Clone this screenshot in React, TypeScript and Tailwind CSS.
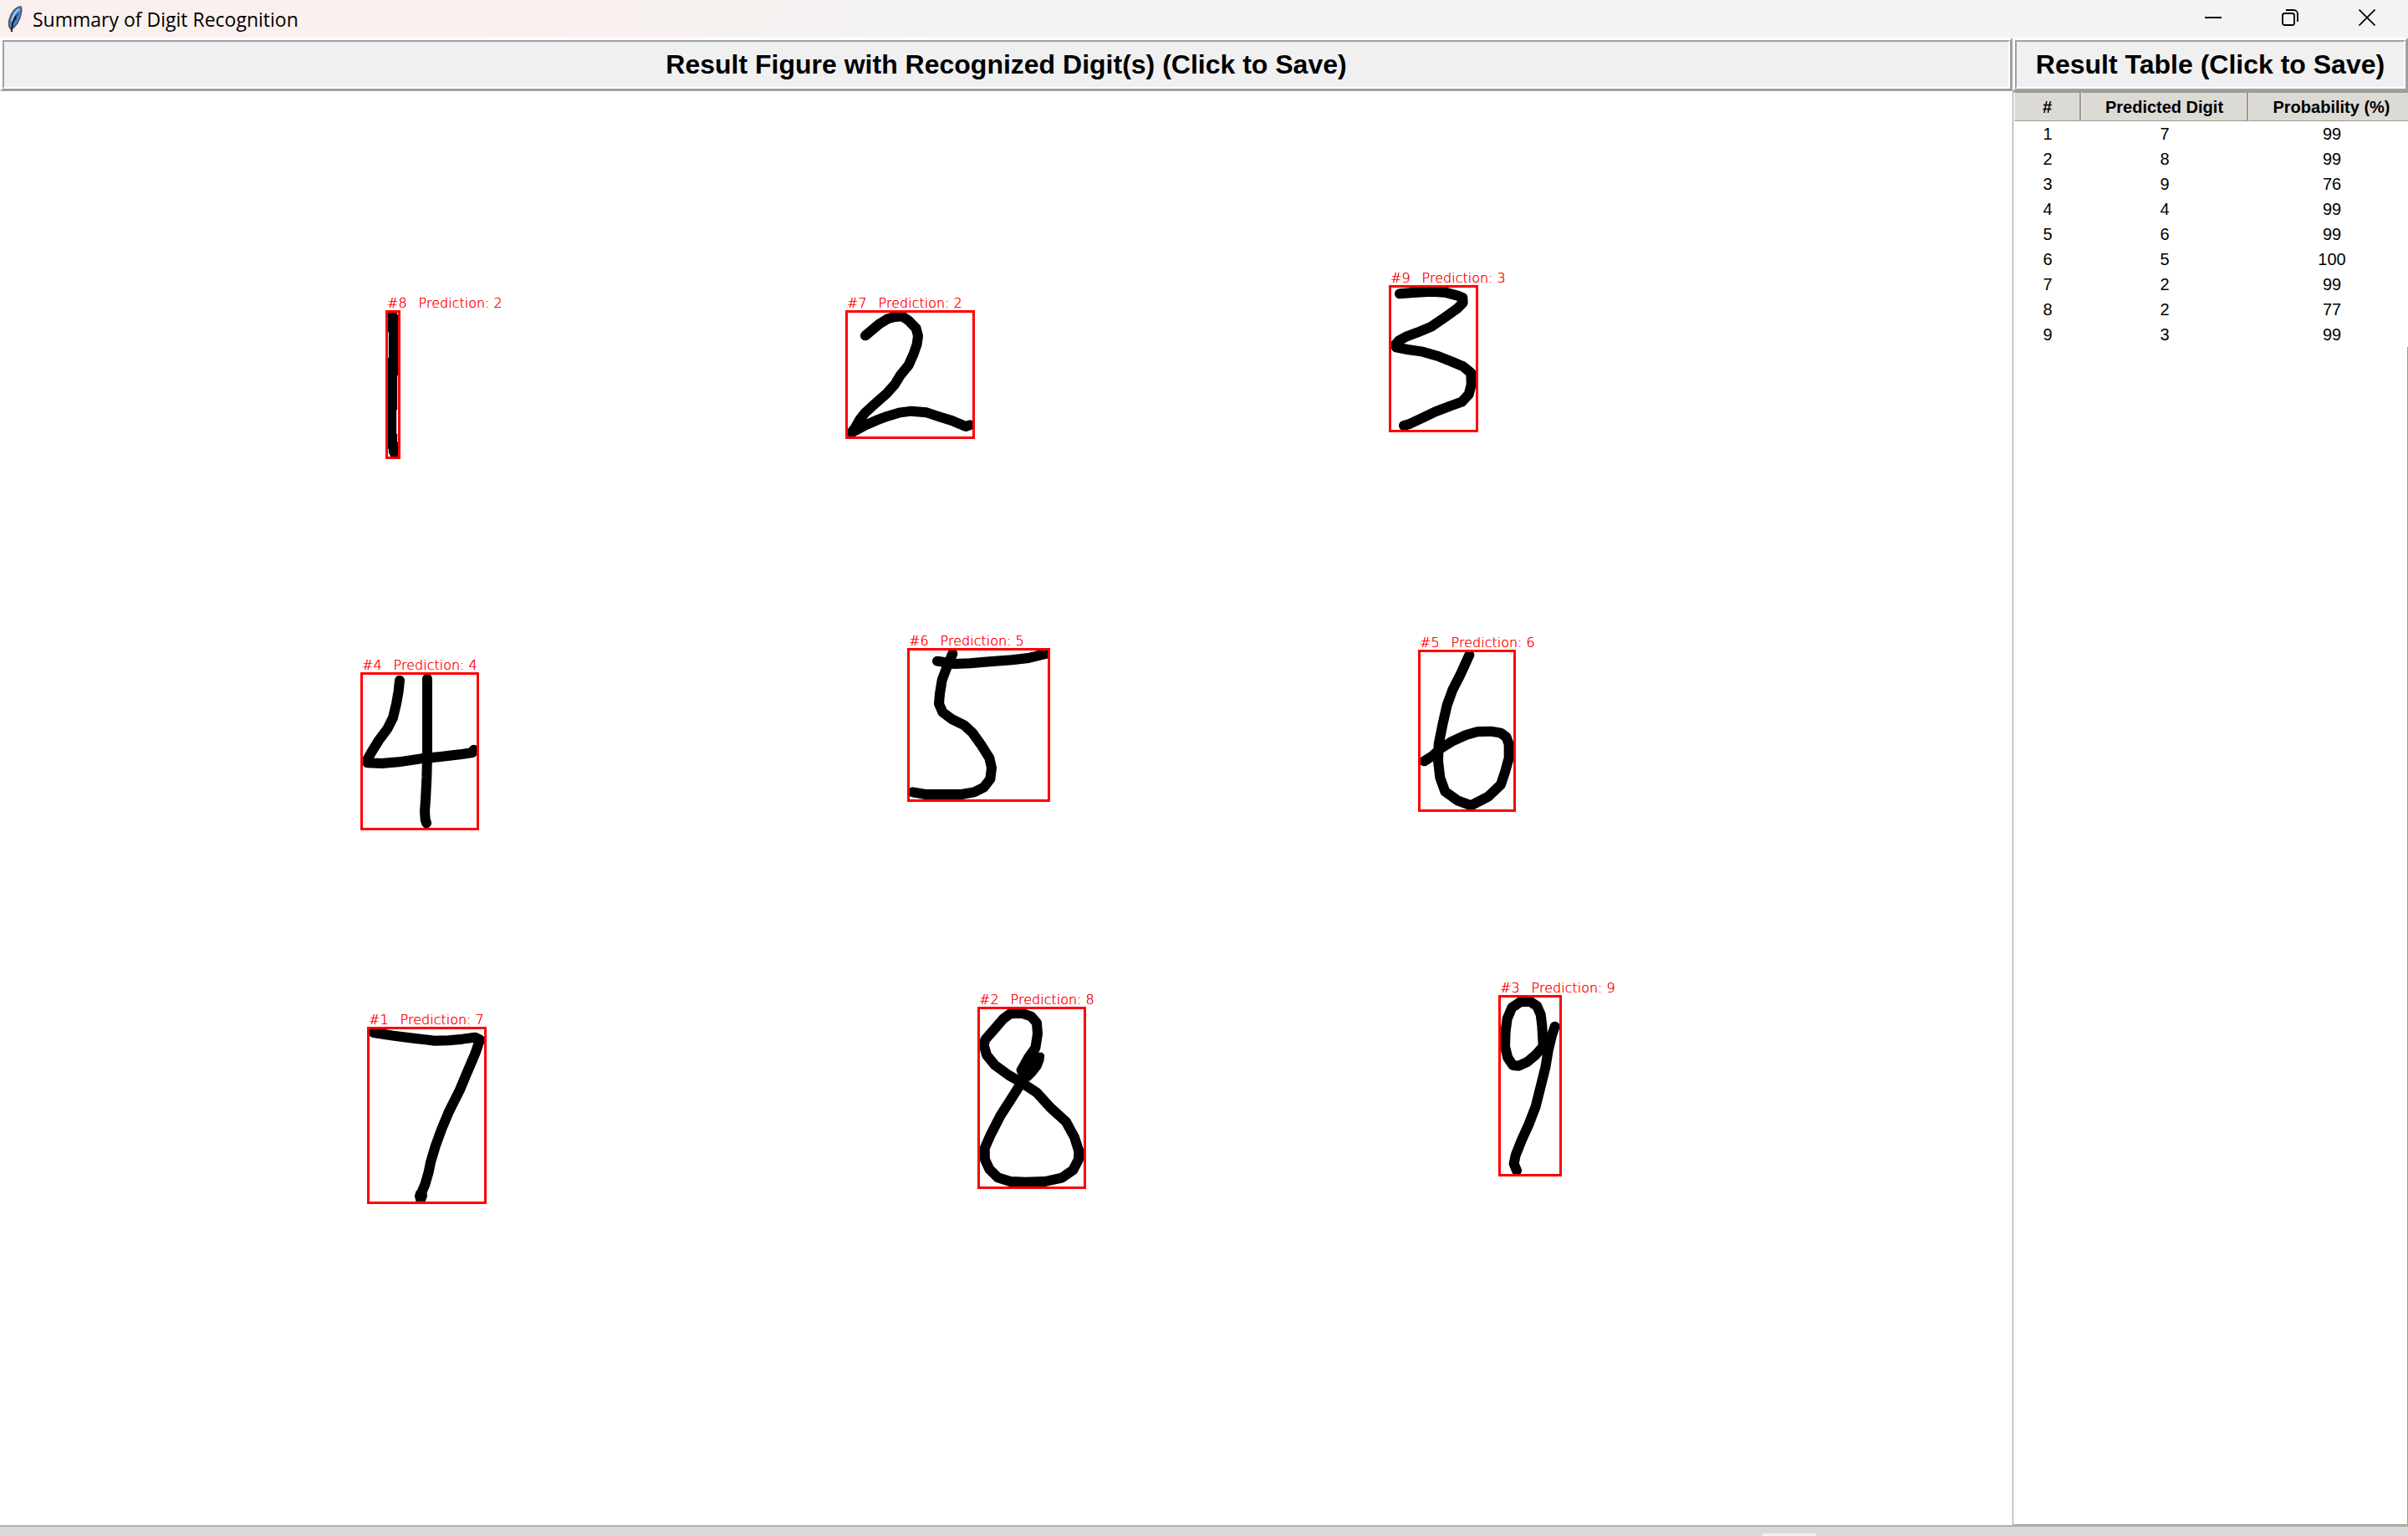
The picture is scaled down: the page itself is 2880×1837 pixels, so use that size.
import React from 'react';

type Detection = {
  id: number;
  digit: number;
  probability: number;
  place: string;
  viewBox: string;
  strokes: string[];
  shapes?: string[];
};

/* Every viewBox uses three drawing units per screen pixel. */
const detections: Detection[] = [
  {
    id: 1,
    digit: 7,
    probability: 99,
    place: 'left-[439px] top-[1119px] w-[143px] h-[212px]',
    viewBox: '57 84 429 636',
    strokes: [
      'M80 105 L150 116 L230 126 L300 134 L350 133 L400 128 L445 122 L462 130 L445 180 L415 250 L390 310 L350 390 L325 450 L303 510 L285 570 L278 605 L265 650 L250 685',
    ],
    shapes: ['M228 691 L234 672 L266 666 L273 690 L266 710 L233 710 Z'],
  },
  {
    id: 2,
    digit: 8,
    probability: 99,
    place: 'left-[1169px] top-[1095px] w-[130px] h-[218px]',
    viewBox: '57 72 390 654',
    strokes: [
      'M275 255 L250 290 L218 340 L180 400 L140 462 L105 530 L83 580 L84 620 L100 655 L130 685 L175 699 L230 701 L300 699 L360 686 L400 658 L420 620 L421 590 L405 540 L375 485 L320 435 L270 380 L220 347 L170 318 L120 282 L90 245 L80 210 L85 190 L120 150 L150 115 L175 97 L215 95 L250 107 L270 130 L273 170 L265 220 L240 255 L215 300',
    ],
    shapes: ['M250 235 L290 237 L297 245 L295 266 L285 292 L265 318 L245 338 L205 320 L198 295 Z'],
  },
  {
    id: 3,
    digit: 9,
    probability: 76,
    place: 'left-[1792px] top-[1081px] w-[76px] h-[217px]',
    viewBox: '36 90 228 651',
    strokes: [
      'M205 265 L170 305 L140 330 L110 344 L88 342 L70 315 L60 275 L62 220 L68 175 L85 135 L115 115 L150 113 L175 130 L188 160 L193 200 L197 270',
      'M239 203 L228 235 L215 290 L205 350 L185 430 L170 490 L145 555 L120 610 L98 665 L92 695 L102 720',
    ],
  },
  {
    id: 4,
    digit: 4,
    probability: 99,
    place: 'left-[431px] top-[695px] w-[142px] h-[189px]',
    viewBox: '63 102 426 567',
    strokes: [
      'M204 131 L200 170 L192 215 L180 265 L160 305 L130 345 L105 385 L88 415 L88 427 L140 429 L200 424 L280 412 L350 405 L420 397 L465 390 L470 380',
      'M303 125 L303 240 L303 400 L301 480 L297 560 L294 600 L296 630 L300 643',
    ],
  },
  {
    id: 5,
    digit: 6,
    probability: 99,
    place: 'left-[1696px] top-[668px] w-[117px] h-[194px]',
    viewBox: '48 81 351 582',
    strokes: [
      'M232 100 L200 170 L172 225 L152 280 L136 350 L122 420 L120 480 L127 540 L145 590 L190 622 L238 640 L300 608 L345 565 L360 520 L374 470 L374 420 L365 395 L345 380 L310 374 L262 375 L220 387 L170 410 L130 435 L100 462 L70 481',
    ],
  },
  {
    id: 6,
    digit: 5,
    probability: 100,
    place: 'left-[1085px] top-[666px] w-[171px] h-[184px]',
    viewBox: '45 105 513 552',
    strokes: [
      'M153 152 L215 162 L270 160 L340 154 L420 148 L480 141 L545 125',
      'M208 125 L185 180 L170 220 L162 270 L159 305 L172 335 L205 360 L250 382 L280 410 L310 452 L340 500 L348 535 L343 575 L320 605 L285 622 L240 630 L180 630 L110 630 L65 622',
    ],
  },
  {
    id: 7,
    digit: 2,
    probability: 99,
    place: 'left-[1011px] top-[262px] w-[155px] h-[154px]',
    viewBox: '93 93 465 462',
    strokes: [
      'M165 184 L215 142 L245 124 L270 117 L298 115 L320 130 L347 158 L354 185 L350 215 L338 250 L320 290 L290 327 L270 360 L240 393 L200 428 L165 460 L145 485 L128 515 L115 532 L160 508 L205 488 L245 473 L290 460 L330 455 L385 460 L430 475 L475 489 L525 510 L540 505',
    ],
  },
  {
    id: 8,
    digit: 2,
    probability: 77,
    place: 'left-[461px] top-[262px] w-[18px] h-[178px]',
    viewBox: '63 93 54 534',
    strokes: [],
    shapes: [
      'M75 100 H102 L108 114 V326 H105 V450 H102 V537 H105 V567 H108 V618 H82 L75 604 V590 H72 V264 H75 V170 H72 V104 Z',
    ],
  },
  {
    id: 9,
    digit: 3,
    probability: 99,
    place: 'left-[1661px] top-[232px] w-[107px] h-[176px]',
    viewBox: '63 93 321 528',
    strokes: [
      'M102 124 L150 120 L215 116 L265 119 L310 131 L328 138 L329 156 L310 176 L265 208 L215 242 L165 263 L125 278 L100 292 L88 305 L90 316 L130 324 L185 332 L240 348 L290 368 L330 385 L358 408 L359 450 L350 485 L325 512 L285 526 L230 547 L180 571 L135 592 L117 597',
    ],
  },
];

function FeatherIcon() {
  return (
    <svg className="h-8 w-5" viewBox="0 0 20 32" aria-hidden="true">
      <path d="M17 1 C11 1 5 8 3 17 C2 22 3 26 5 28 C11 25 16 17 17 10 C18 6 18 3 17 1 Z" fill="#4a86d0" stroke="#55565c" strokeWidth="1.6" />
      <path d="M15 4 C11 6 8 11 6 18" stroke="#9cc6f2" strokeWidth="2.4" fill="none" />
      <path d="M14 9 L11 13 M12 14 L9 18" stroke="#1d3f7d" strokeWidth="1.5" />
      <path d="M11 12 C8 17 6 23 6 31" stroke="#16181d" strokeWidth="1.8" fill="none" />
    </svg>
  );
}

function TitleBar() {
  return (
    <header className="flex h-[45px] shrink-0 items-center justify-between bg-linear-to-r from-[#faf0ed] from-20% to-[#f3f3f3] to-40% pr-[3px] pl-2">
      <div className="flex items-center gap-[11px]">
        <FeatherIcon />
        <h1 className="font-['Open_Sans',sans-serif] text-[23px] leading-8 text-black">Summary of Digit Recognition</h1>
      </div>
      <div className="flex h-full pb-[3px]">
        <button type="button" aria-label="Minimize" className="flex w-[92px] items-center justify-center">
          <svg className="h-5 w-5" viewBox="0 0 20 20" stroke="#000" strokeWidth="2">
            <path d="M0 10 H20" />
          </svg>
        </button>
        <button type="button" aria-label="Restore" className="flex w-[92px] items-center justify-center">
          <svg className="h-5 w-5" viewBox="0 0 20 20" fill="none" stroke="#000" strokeWidth="1.8">
            <rect x="1" y="5" width="14" height="14" rx="2.5" />
            <path d="M5 1 H14 A5 5 0 0 1 19 6 V15" />
          </svg>
        </button>
        <button type="button" aria-label="Close" className="flex w-[92px] items-center justify-center">
          <svg className="h-5 w-5" viewBox="0 0 20 20" stroke="#000" strokeWidth="1.7">
            <path d="M0.5 0.5 L19.5 19.5 M19.5 0.5 L0.5 19.5" />
          </svg>
        </button>
      </div>
    </header>
  );
}

function SaveButton({ children }: { children: React.ReactNode }) {
  return (
    <button
      type="button"
      className="flex h-16 w-full shrink-0 border-[3px] border-t-white border-r-[#a0a0a0] border-b-[#a0a0a0] border-l-white"
    >
      <span className="flex flex-1 items-center justify-center border-2 border-t-[#a0a0a0] border-r-white border-b-white border-l-[#a0a0a0] bg-[#f0f0f0] text-[32px] leading-9 font-bold whitespace-nowrap">
        {children}
      </span>
    </button>
  );
}

function DetectionBox({ detection }: { detection: Detection }) {
  return (
    <div className={`absolute ${detection.place}`}>
      <p className="absolute bottom-full left-[2px] flex gap-3.5 font-['DejaVu_Sans',sans-serif] text-[16px] leading-4 font-extralight whitespace-nowrap text-[#ff0000] [text-shadow:0_0_0_#ff0000]">
        <span>#{detection.id}</span>
        <span>Prediction: {detection.digit}</span>
      </p>
      <svg className="h-full w-full" viewBox={detection.viewBox} role="img" aria-label={`Handwritten digit ${detection.id}`}>
        {detection.strokes.map((d) => (
          <path key={d} d={d} fill="none" stroke="#000" strokeWidth="36" strokeLinecap="round" strokeLinejoin="round" />
        ))}
        {detection.shapes?.map((d) => (
          <path key={d} d={d} fill="#000" stroke="#000" strokeWidth="1" />
        ))}
      </svg>
      <div className="absolute inset-0 border-[3px] border-[#ff0000]" />
    </div>
  );
}

function ResultTable() {
  const headClass =
    'h-[35px] border-y border-r-2 border-l border-t-[#9e9a91] border-r-[#9e9a91] border-b-[#9e9a91] border-l-[#eeebe7] bg-[#dcdad5] p-0 text-center font-bold whitespace-nowrap';
  return (
    <div className="flex flex-1 flex-col overflow-hidden border-y border-l border-[#9e9a91] pl-px">
      <table className="w-[480px] table-fixed border-separate border-spacing-0 text-[20px] leading-[30px]">
        <thead>
          <tr>
            <th scope="col" className={`w-20 ${headClass}`}>#</th>
            <th scope="col" className={`w-[200px] ${headClass}`}>Predicted Digit</th>
            <th scope="col" className={`w-[200px] ${headClass}`}>Probability (%)</th>
          </tr>
        </thead>
        <tbody>
          {detections.map((d) => (
            <tr key={d.id} className="text-center">
              <td className="p-0">{d.id}</td>
              <td className="p-0">{d.digit}</td>
              <td className="p-0">{d.probability}</td>
            </tr>
          ))}
        </tbody>
      </table>
      <div className="flex-1 border-r border-[#9e9a91]" />
    </div>
  );
}

export default function App() {
  return (
    <div className="flex h-screen flex-col overflow-hidden bg-white font-['Liberation_Sans',Arial,sans-serif] text-black">
      <TitleBar />
      <main className="flex min-h-0 flex-1">
        <section className="flex min-w-0 flex-1 flex-col">
          <SaveButton>Result Figure with Recognized Digit(s) (Click to Save)</SaveButton>
          <div className="relative flex-1">
            {detections.map((d) => (
              <DetectionBox key={d.id} detection={d} />
            ))}
          </div>
        </section>
        <aside className="flex w-[473px] shrink-0 flex-col">
          <SaveButton>Result Table (Click to Save)</SaveButton>
          <ResultTable />
        </aside>
      </main>
      <footer className="flex h-[13px] shrink-0 items-end border-t-2 border-[#b0b0b0] bg-[#d9d9d9] pl-[2107px]">
        <div className="h-[3px] w-[66px] rounded-t bg-[#f0f0f0]" />
      </footer>
    </div>
  );
}
